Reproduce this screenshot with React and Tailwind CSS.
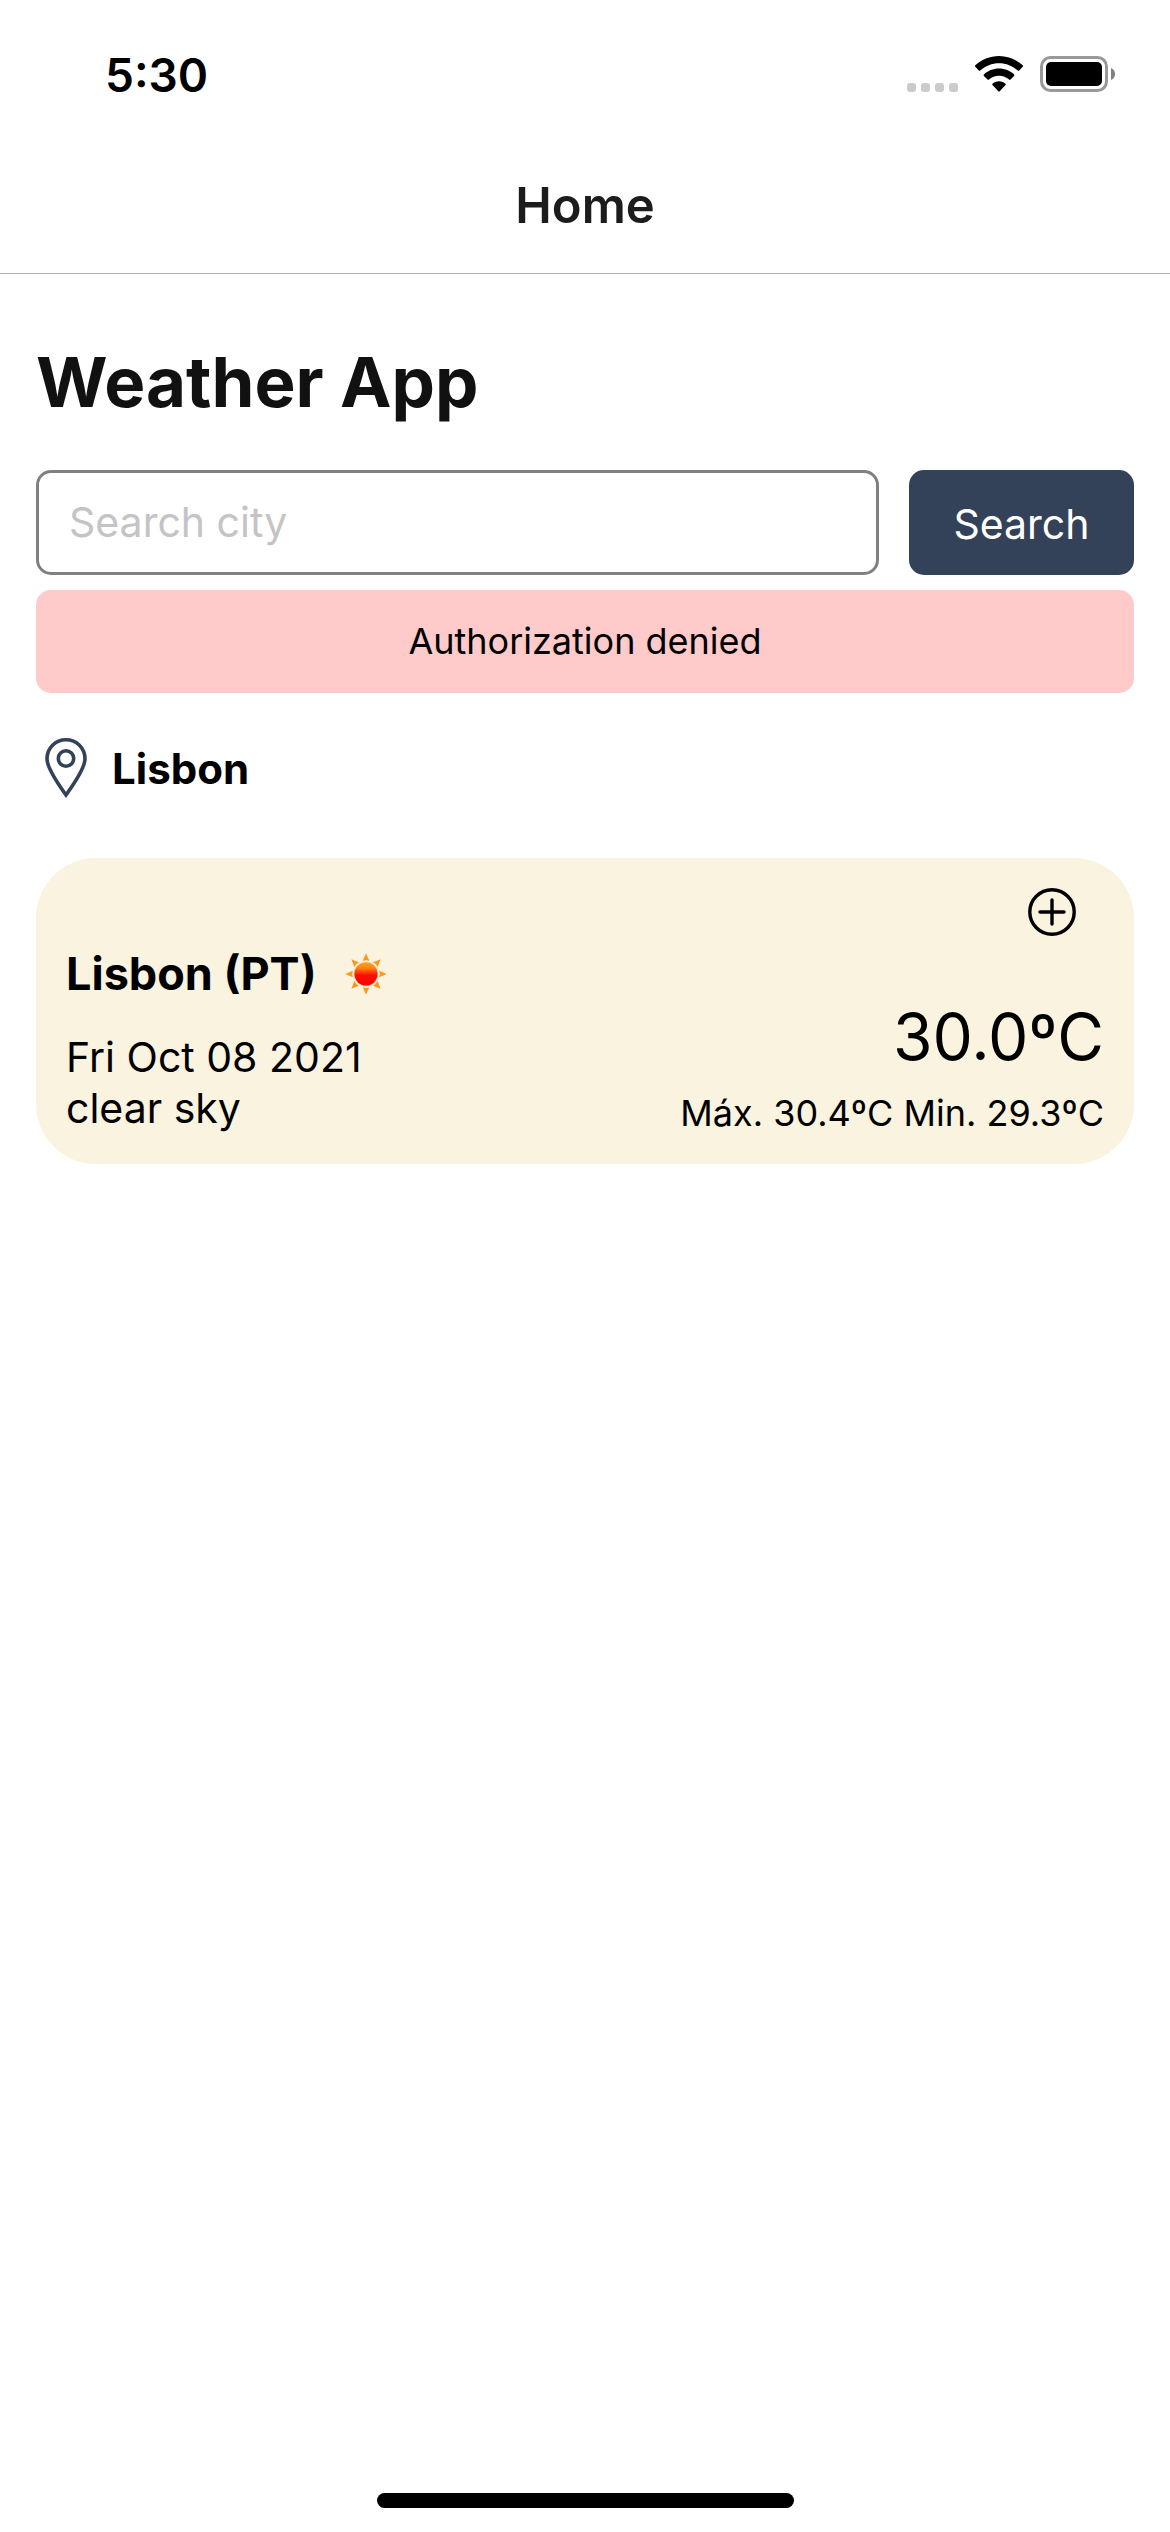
function CellularDots() {
  return (
    <div className="flex gap-[5px] self-end">
      {[0, 1, 2, 3].map((i) => (
        <span key={i} className="size-[9px] rounded-[3px] bg-[#cbcbcb]" />
      ))}
    </div>
  );
}

function WifiIcon() {
  return (
    <svg width="48" height="36" viewBox="0 0 48 36" role="img" aria-label="Wi-Fi">
      <path d="M24 0C33 0 41.500 3.500 47.700 9.300Q48.400 10 47.700 10.700L44.200 14.500Q43.500 15.200 42.800 14.500C37.700 9.900 31 7.200 24 7.200S10.300 9.900 5.200 14.500Q4.500 15.200 3.800 14.500L.3 10.700Q-.4 10 .3 9.300C6.500 3.500 15 0 24 0Z" />
      <path d="M24 12.600C29.900 12.600 35.200 14.900 39.100 18.500Q39.800 19.200 39.100 19.900L35.500 23.600Q34.800 24.300 34.100 23.600C31.400 21.200 27.900 19.800 24 19.800S16.600 21.200 13.900 23.600Q13.200 24.300 12.500 23.600L8.900 19.900Q8.200 19.200 8.900 18.500C12.800 14.900 18.100 12.600 24 12.600Z" />
      <path d="M24 25.200C26.500 25.200 28.800 26.100 30.500 27.700Q31.200 28.400 30.500 29.100L24.700 35.200Q24 35.900 23.300 35.200L17.500 29.100Q16.800 28.400 17.500 27.700C19.200 26.100 21.500 25.200 24 25.200Z" />
    </svg>
  );
}

function BatteryIcon() {
  return (
    <svg width="75" height="36" viewBox="0 0 75 36" role="img" aria-label="Battery full">
      <rect x="1.500" y="1.500" width="65" height="33" rx="9" fill="none" stroke="#999" strokeWidth="3" />
      <rect x="6" y="6" width="56" height="24" rx="5" />
      <path d="M71 12C73.500 13 75 15.300 75 18S73.500 23 71 24Z" fill="#808080" />
    </svg>
  );
}

function PinIcon() {
  return (
    <svg width="60" height="60" viewBox="0 0 60 60" fill="none" stroke="#334258" strokeWidth="3.600" aria-hidden="true">
      <path d="M30 57C24 48.500 11 31 11 20.800C11 10 19.500 1.800 30 1.800S49 10 49 20.800C49 31 36 48.500 30 57Z" />
      <circle cx="30" cy="20.500" r="7.700" />
    </svg>
  );
}

function PlusIcon() {
  return (
    <svg width="48" height="48" viewBox="0 0 48 48" fill="none" stroke="#000" strokeWidth="3.400" strokeLinecap="round" aria-hidden="true">
      <circle cx="24" cy="24" r="22.200" />
      <path d="M24 12V36M12 24H36" />
    </svg>
  );
}

function SunIcon() {
  return (
    <svg width="42" height="42" viewBox="0 0 42 42" role="img" aria-label="Sunny">
      <defs>
        <linearGradient id="disc" x1="0" y1="0" x2="0" y2="1">
          <stop offset="0" stopColor="#ffa51f" />
          <stop offset="0.250" stopColor="#ff8010" />
          <stop offset="0.550" stopColor="#fd0d00" />
          <stop offset="1" stopColor="#ff0000" />
        </linearGradient>
      </defs>
      {[0, 45, 90, 135, 180, 225, 270, 315].map((a) => (
        <path key={a} d="M21 .3L24.300 7.800Q21 6.600 17.700 7.800Z" fill="#f99a1c" transform={`rotate(${a} 21 21)`} />
      ))}
      <circle cx="21" cy="21" r="12.300" fill="#ffc9a0" />
      <circle cx="21" cy="21" r="11.500" fill="url(#disc)" />
    </svg>
  );
}

export default function App() {
  return (
    <div className="flex min-h-screen flex-col bg-white font-['Inter',sans-serif] text-black">
      <div className="flex h-[132px] items-start justify-between pt-14 pr-[55px] pl-[105px]">
        <time className="text-[46px] leading-[38px] font-semibold">5:30</time>
        <div className="flex h-9 items-center">
          <CellularDots />
          <div className="ml-[17px]">
            <WifiIcon />
          </div>
          <div className="ml-[17px]">
            <BatteryIcon />
          </div>
        </div>
      </div>

      <header className="flex h-[142px] items-center justify-center border-b border-[#b0b0b2] pt-1.5">
        <span className="text-[49px] leading-[60px] font-semibold text-[#1c1c1e]">Home</span>
      </header>

      <main className="px-9 pt-[66px]">
        <h1 className="text-[69px] leading-[84px] font-bold text-[#111]">Weather App</h1>

        <form className="mt-[46px] flex h-[105px] gap-[30px]" onSubmit={(e) => e.preventDefault()}>
          <input
            type="text"
            aria-label="Search city"
            placeholder="Search city"
            className="min-w-0 flex-1 rounded-[15px] border-3 border-[#808080] px-[30px] text-[41px] outline-none placeholder:text-[#c4c4c6]"
          />
          <button type="submit" className="w-[225px] rounded-[15px] bg-[#334258] pt-1 text-[41px] text-white">
            Search
          </button>
        </form>

        <p role="alert" className="mt-[15px] rounded-[15px] bg-[#fecaca] py-[30px] text-center text-[36px] leading-[43px]">
          Authorization denied
        </p>

        <div className="mt-[45px] flex items-center">
          <PinIcon />
          <h2 className="ml-4 text-[42px] leading-[51px] font-bold">Lisbon</h2>
        </div>

        <section className="mt-[60px] rounded-[60px] bg-[#faf3e0] p-[30px]">
          <div className="flex justify-end pr-7">
            <button type="button" aria-label="Add city" className="size-12">
              <PlusIcon />
            </button>
          </div>
          <div className="mt-3 flex items-end justify-between">
            <div className="text-[41px] leading-[51px]">
              <div className="mb-8 flex items-center gap-7">
                <h3 className="text-[45px] leading-[52px] font-bold">Lisbon (PT)</h3>
                <SunIcon />
              </div>
              <p>Fri Oct 08 2021</p>
              <p>clear sky</p>
            </div>
            <div className="text-right">
              <p className="mb-4 text-[64px] leading-[78px]">30.0ºC</p>
              <p className="text-[36px] leading-[42px]">Máx. 30.4ºC Min. 29.3ºC</p>
            </div>
          </div>
        </section>
      </main>

      <div className="mx-auto mt-auto mb-6 h-[15px] w-[417px] rounded-full bg-black" />
    </div>
  );
}
